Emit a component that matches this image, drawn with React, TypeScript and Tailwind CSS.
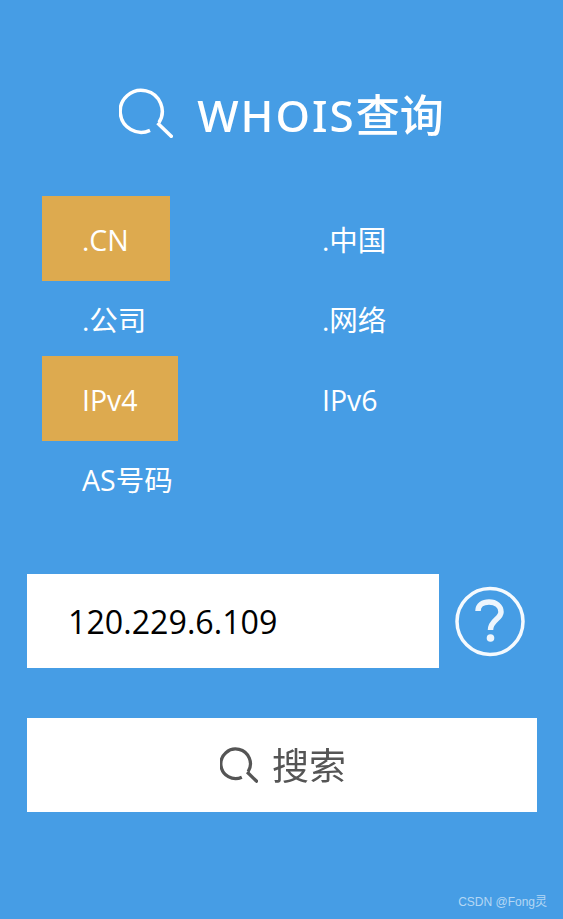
const sans = { fontFamily: '"Open Sans","Noto Sans CJK SC",sans-serif' };

function Item({ dot, latin, cjk, active }: { dot?: boolean; latin?: string; cjk?: string; active?: boolean }) {
  return (
    <div className="h-[80px]">
      <div className={`inline-flex h-[85px] min-w-[128px] items-center px-10 pt-[3px] text-[28.5px] leading-none text-white ${active ? "bg-[#ddaa4f]" : ""}`}>
        {dot && <span className="text-[28px]">.</span>}
        {latin && <span>{latin}</span>}
        {cjk && <span>{cjk}</span>}
      </div>
    </div>
  );
}

function SearchIcon({ width, height, stroke, color }: { width: number; height: number; stroke: number; color: string }) {
  return (
    <svg width={width} height={height} viewBox="0 0 54 50" fill="none" stroke={color} strokeWidth={stroke}>
      <path d="M31 42.4A21 21 0 1 1 40 34.5" />
      <path d="M38.5 35L53.5 49.5" />
    </svg>
  );
}

export default function App() {
  return (
    <div className="relative h-[919px] w-[563px] overflow-hidden bg-[#469de5] px-[27px]" style={sans}>
      <div className="flex h-[196px] items-start justify-center gap-6 pt-[88px]">
        <SearchIcon width={54} height={50} stroke={3.5} color="#ffffff" />
        <div className="text-[44px] leading-[54px] font-medium text-white blur-[0.6px] [font-family:'Noto_Sans','Noto_Sans_CJK_SC',sans-serif]">
          <span className="tracking-[2px]">WHOIS</span>查询
        </div>
      </div>
      <div className="grid grid-cols-[240px_240px] pl-[15px]">
        <Item dot latin="CN" active />
        <Item dot cjk="中国" />
        <Item dot cjk="公司" />
        <Item dot cjk="网络" />
        <Item latin="IPv4" active />
        <Item latin="IPv6" />
        <Item latin="AS" cjk="号码" />
      </div>
      <div className="mt-[58px] flex items-center">
        <input
          readOnly
          value="120.229.6.109"
          className="h-[94px] w-[412px] bg-white pl-[41px] text-[32.2px] text-black outline-none"
        />
        <svg className="ml-4 blur-[0.4px]" width="71" height="71" viewBox="0 0 71 71" fill="none" stroke="#ffffff">
          <circle cx="35" cy="35.5" r="33" strokeWidth="3.5" opacity="0.95" />
          <path d="M23 25C23 19 28 16 34 16C41 16 46 20 46 26C46 33 35.5 34 35.5 44" strokeWidth="5.5" opacity="0.9" />
          <circle cx="35.5" cy="52" r="3.8" fill="#ffffff" stroke="none" opacity="0.9" />
        </svg>
      </div>
      <div className="mt-[50px] flex h-[94px] w-[510px] items-center justify-center gap-[14px] bg-white pl-[2px]">
        <SearchIcon width={38} height={36} stroke={4.6} color="#555555" />
        <span className="pb-[2px] text-[37px] leading-none text-[#555555] blur-[0.5px] [font-family:'Noto_Sans_CJK_SC',sans-serif]">搜索</span>
      </div>
      <div className="absolute right-4 bottom-[9px] text-xs text-white/60 [font-family:'Liberation_Sans','Noto_Sans_CJK_SC',sans-serif]">
        CSDN @Fong灵
      </div>
    </div>
  );
}
